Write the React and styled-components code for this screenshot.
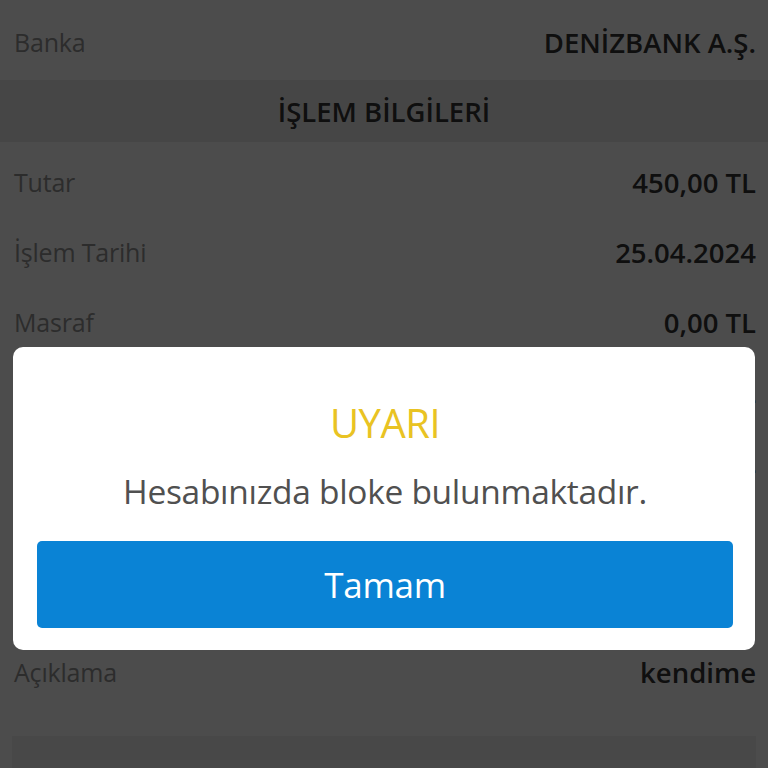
import React from 'react'
import styled, { createGlobalStyle } from 'styled-components'

const GlobalStyle = createGlobalStyle`
  html, body {
    margin: 0;
    padding: 0;
    background: #ffffff;
    font-family: "Open Sans", "Noto Sans", sans-serif;
  }
  * { box-sizing: border-box; }
`

const rowsTop = [{ label: 'Banka', value: 'DENİZBANK A.Ş.' }]

const rowsBottom = [
    { label: 'Tutar', value: '450,00 TL' },
    { label: 'İşlem Tarihi', value: '25.04.2024' },
    { label: 'Masraf', value: '0,00 TL' },
    { label: 'BSMV', value: '0,00 TL' },
    { label: 'Toplam Tutar', value: '450,00 TL' },
    { label: 'Gönderen', value: 'Hesabım' },
    { label: 'Alıcı', value: 'Hesabım' },
    { label: 'Açıklama', value: 'kendime' },
]

function App() {
    return (
        <>
            <GlobalStyle />
            <Page>
                {rowsTop.map((r) => (
                    <Row key={r.label} first>
                        <Label>{r.label}</Label>
                        <Value>{r.value}</Value>
                    </Row>
                ))}
                <SectionHeader>İŞLEM BİLGİLERİ</SectionHeader>
                {rowsBottom.map((r) => (
                    <Row key={r.label}>
                        <Label>{r.label}</Label>
                        <Value>{r.value}</Value>
                    </Row>
                ))}
                <BottomBlock />
            </Page>

            <Overlay>
                <Dialog>
                    <Title>UYARI</Title>
                    <Message>Hesabınızda bloke bulunmaktadır.</Message>
                    <OkButton>Tamam</OkButton>
                </Dialog>
            </Overlay>
        </>
    )
}

const Page = styled.div`
    width: 768px;
    height: 768px;
    overflow: hidden;
    background: #ffffff;
    display: flex;
    flex-direction: column;
`

const Row = styled.div`
    flex: none;
    height: ${(p) => (p.first ? '80px' : '70px')};
    padding: ${(p) => (p.first ? '4px' : '10px')} 12px 0 14px;
    display: flex;
    align-items: center;
    justify-content: space-between;
`

const Label = styled.span`
    font-size: 25px;
    color: #959595;
    letter-spacing: -0.2px;
`

const Value = styled.span`
    font-size: 27.5px;
    font-weight: 600;
    color: #333333;
    letter-spacing: 0;
`

const SectionHeader = styled.div`
    flex: none;
    height: 62px;
    background: #ececec;
    display: flex;
    align-items: center;
    justify-content: center;
    font-size: 27.5px;
    font-weight: 600;
    color: #333333;
`

const BottomBlock = styled.div`
    flex: none;
    margin: 34px 12px 0 12px;
    height: 80px;
    background: #f1f1f1;
`

const Overlay = styled.div`
    position: fixed;
    inset: 0;
    background: rgba(0, 0, 0, 0.7);
    padding: 347px 13px 0 13px;
`

const Dialog = styled.div`
    background: #ffffff;
    border-radius: 10px;
    height: 303px;
    padding: 46px 22px 0 24px;
    display: flex;
    flex-direction: column;
    align-items: center;
`

const Title = styled.div`
    font-size: 40px;
    line-height: 60px;
    color: #e9c323;
    letter-spacing: -0.5px;
`

const Message = styled.div`
    margin-top: 18px;
    font-size: 33.5px;
    line-height: 40px;
    color: #505050;
    letter-spacing: -0.3px;
`

const OkButton = styled.button`
    margin-top: 30px;
    width: 100%;
    height: 87px;
    border: none;
    border-radius: 5px;
    background: #0a83d5;
    color: #ffffff;
    font-family: "Open Sans", "Noto Sans", sans-serif;
    font-size: 35px;
    letter-spacing: -0.3px;
`

export default App
